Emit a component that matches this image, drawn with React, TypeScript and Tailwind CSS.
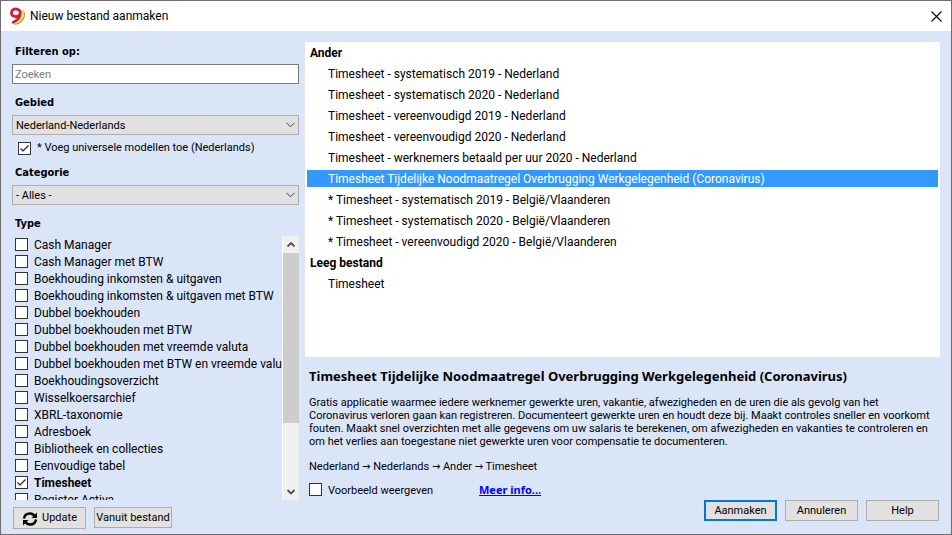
import { useState } from "react";

const types = [
  "Cash Manager",
  "Cash Manager met BTW",
  "Boekhouding inkomsten & uitgaven",
  "Boekhouding inkomsten & uitgaven met BTW",
  "Dubbel boekhouden",
  "Dubbel boekhouden met BTW",
  "Dubbel boekhouden met vreemde valuta",
  "Dubbel boekhouden met BTW en vreemde valuta",
  "Boekhoudingsoverzicht",
  "Wisselkoersarchief",
  "XBRL-taxonomie",
  "Adresboek",
  "Bibliotheek en collecties",
  "Eenvoudige tabel",
  "Timesheet",
  "Register Activa",
];

const groups = [
  {
    name: "Ander",
    items: [
      "Timesheet - systematisch 2019 - Nederland",
      "Timesheet - systematisch 2020 - Nederland",
      "Timesheet - vereenvoudigd 2019 - Nederland",
      "Timesheet - vereenvoudigd 2020 - Nederland",
      "Timesheet - werknemers betaald per uur 2020 - Nederland",
      "Timesheet Tijdelijke Noodmaatregel Overbrugging Werkgelegenheid (Coronavirus)",
      "* Timesheet - systematisch 2019 - België/Vlaanderen",
      "* Timesheet - systematisch 2020 - België/Vlaanderen",
      "* Timesheet - vereenvoudigd 2020 - België/Vlaanderen",
    ],
  },
  { name: "Leeg bestand", items: ["Timesheet"] },
];

function Check({ id, checked, onChange }: { id: string; checked: boolean; onChange: () => void }) {
  return (
    <span className="relative block size-[13px] shrink-0">
      <input
        id={id}
        type="checkbox"
        checked={checked}
        onChange={onChange}
        className="block size-[13px] appearance-none border border-[#333] bg-white"
      />
      {checked && (
        <svg viewBox="0 0 13 13" className="pointer-events-none absolute inset-0 size-[13px]" fill="none" stroke="#222" strokeWidth="1.2">
          <path d="M2.5 6.5 5 9l5.5-5.5" />
        </svg>
      )}
    </span>
  );
}

function Select({ id, options }: { id: string; options: string[] }) {
  return (
    <div className="relative">
      <select
        id={id}
        className="block h-5 w-full appearance-none border border-[#adadad] bg-[#e1e1e1] px-[3px] pt-px text-[11px] leading-4 text-black"
      >
        {options.map((o) => (
          <option key={o}>{o}</option>
        ))}
      </select>
      <svg viewBox="0 0 9 6" className="pointer-events-none absolute top-[7px] right-1 h-[6px] w-[9px]" fill="none" stroke="#444">
        <path d="M.5 .8 4.5 4.8 8.5 .8" />
      </svg>
    </div>
  );
}

const button = "flex items-center justify-center bg-[#e1e1e1] pt-px text-[11px] text-black";
const heading = "pl-[3px] text-[11px] leading-[18px] font-bold font-['DejaVu_Sans_Condensed','DejaVu_Sans',sans-serif]";

export default function App() {
  const [checked, setChecked] = useState<string[]>(["Timesheet"]);
  const [universal, setUniversal] = useState(true);
  const [preview, setPreview] = useState(false);
  const [selected, setSelected] = useState(groups[0].items[5]);

  const toggle = (t: string) =>
    setChecked((c) => (c.includes(t) ? c.filter((x) => x !== t) : [...c, t]));

  return (
    <div className="flex h-screen flex-col overflow-hidden border border-[#6e6e6e] bg-[#dbe5f8] font-['Roboto','DejaVu_Sans_Condensed',sans-serif] text-xs text-black">
      <header className="flex h-[30px] shrink-0 items-center bg-white pr-[7px] pl-2">
        <svg viewBox="0 0 16 18" className="mr-[5px] h-[18px] w-4" fill="none" strokeLinecap="round">
          <path d="M14 4.500c2.200 4.500-.5 10.500-7.500 12" stroke="#b98f2c" strokeWidth="2.400" />
          <path d="M13.600 3.500c2 4.500-.5 10.500-7.100 12.300" stroke="#f3dc70" strokeWidth="2" />
          <path d="M10.500 8C8.500 10.300 2.600 10.200 2.400 6 2.300 2.600 5.800 1.600 8 2.100c5.200 1.300 4.600 9.600-3.800 13.100" stroke="#d11f36" strokeWidth="2.800" />
        </svg>
        <h1 className="flex-1">Nieuw bestand aanmaken</h1>
        <button type="button" aria-label="Sluiten" className="flex size-4 items-center justify-center">
          <svg viewBox="0 0 11 11" className="size-[11px]" stroke="#000" strokeWidth="1.1">
            <path d="M.5 .5l10 10M10.500 .5l-10 10" />
          </svg>
        </button>
      </header>

      <div className="flex min-h-0 flex-1">
        <aside className="flex w-[298px] shrink-0 flex-col pb-[5px] pl-[11px]">
          <label htmlFor="search" className={"mt-3 " + heading}>
            Filteren op:
          </label>
          <input
            id="search"
            placeholder="Zoeken"
            className="mt-[3px] h-5 shrink-0 border border-[#7a7a7a] bg-white px-[2px] pt-px text-[11px] placeholder:text-[#7a7a7a]"
          />
          <label htmlFor="area" className={"mt-[10px] mb-[3px] " + heading}>
            Gebied
          </label>
          <Select id="area" options={["Nederland-Nederlands", "België-Nederlands"]} />
          <div className="mt-[6px] flex items-center gap-[6px] pl-[6px]">
            <Check id="universal" checked={universal} onChange={() => setUniversal(!universal)} />
            <label htmlFor="universal" className="text-[11px] leading-[14px]">
              * Voeg universele modellen toe (Nederlands)
            </label>
          </div>
          <label htmlFor="category" className={"mt-[9px] mb-[3px] " + heading}>
            Categorie
          </label>
          <Select id="category" options={["- Alles -", "Ander", "Leeg bestand"]} />
          <h2 className={"mt-[10px] " + heading}>Type</h2>
          <div className="mt-[3px] flex min-h-0 flex-1 pl-[3px]">
            <ul className="min-w-0 flex-1 overflow-hidden">
              {types.map((t, i) => (
                <li key={t} className="flex h-[17px] items-center gap-[6px]">
                  <Check id={"type" + i} checked={checked.includes(t)} onChange={() => toggle(t)} />
                  <label
                    htmlFor={"type" + i}
                    className={"h-[17px] pt-px leading-[17px] whitespace-nowrap " + (checked.includes(t) ? "font-bold" : "")}
                  >
                    {t}
                  </label>
                </li>
              ))}
            </ul>
            <div className="flex w-[17px] shrink-0 flex-col items-center border-l border-white bg-[#f0f0f0]">
              <svg viewBox="0 0 16 17" className="h-[17px] w-4 shrink-0" fill="none" stroke="#505050" strokeWidth="1.8">
                <path d="M4.500 10.500 8 7l3.500 3.500" />
              </svg>
              <div className="h-[170px] w-4 bg-[#cdcdcd]" />
              <svg viewBox="0 0 16 17" className="mt-auto h-[17px] w-4 shrink-0" fill="none" stroke="#505050" strokeWidth="1.8">
                <path d="M4.500 7 8 10.500 11.500 7" />
              </svg>
            </div>
          </div>
          <div className="mt-[7px] flex gap-2 pl-px">
            <button type="button" className={"h-[22px] w-[73px] gap-1 border border-[#adadad] " + button}>
              <svg viewBox="0 0 16 16" className="size-4" fill="none" stroke="#000" strokeWidth="2.400">
                <path d="M2 7.500C2.500 4 5 2.500 8 2.500c2 0 3.500 1 4.500 2.500M14 8.500c-.5 3.500-3 5-6 5-2 0-3.500-1-4.500-2.500" />
                <path d="M15 1.500V7H9.500zM1 14.500V9h5.500z" fill="#000" stroke="none" />
              </svg>
              Update
            </button>
            <button type="button" className={"h-[21px] w-[78px] border border-[#adadad] whitespace-nowrap " + button}>
              Vanuit bestand
            </button>
          </div>
        </aside>

        <main className="flex min-w-0 flex-1 flex-col pt-[11px] pr-[11px] pl-[6px]">
          <div className="min-h-0 flex-1 overflow-hidden bg-white px-[2px]">
            {groups.map((g) => (
              <section key={g.name}>
                <h2 className="h-[21px] pt-px pl-[3px] leading-[21px] font-bold">{g.name}</h2>
                <ul>
                  {g.items.map((it) => (
                    <li key={it} className="py-[2px]">
                      <button
                        type="button"
                        onClick={() => setSelected(it)}
                        className={
                          "block h-[17px] w-full pt-px pl-[21px] text-left leading-[17px] whitespace-nowrap " +
                          (it === selected ? "bg-[#3399ff] text-white" : "")
                        }
                      >
                        {it}
                      </button>
                    </li>
                  ))}
                </ul>
              </section>
            ))}
          </div>

          <div className="pt-[11px] pl-1 text-[11px] leading-[13px]">
            <h2 className="font-['Noto_Sans',sans-serif] text-[13px] leading-4 font-bold">{selected}</h2>
            <p className="mt-[12px] whitespace-nowrap">
              Gratis applicatie waarmee iedere werknemer gewerkte uren, vakantie, afwezigheden en de uren die als gevolg van het
              <br />
              Coronavirus verloren gaan kan registreren. Documenteert gewerkte uren en houdt deze bij. Maakt controles sneller en voorkomt
              <br />
              fouten. Maakt snel overzichten met alle gegevens om uw salaris te berekenen, om afwezigheden en vakanties te controleren en
              <br />
              om het verlies aan toegestane niet gewerkte uren voor compensatie te documenteren.
            </p>
            <p className="mt-3">Nederland → Nederlands → Ander → Timesheet</p>
            <div className="mt-[10px] flex items-center">
              <div className="flex w-[170px] items-center gap-[6px]">
                <Check id="preview" checked={preview} onChange={() => setPreview(!preview)} />
                <label htmlFor="preview" className="h-[13px] pt-px">
                  Voorbeeld weergeven
                </label>
              </div>
              <a href="#info" className="font-['Noto_Sans',sans-serif] font-bold text-[#0000ff] underline">
                Meer info...
              </a>
            </div>
          </div>
          <footer className="mt-1 mb-[13px] flex justify-end gap-2 pr-px">
            <button type="button" className={"h-[21px] w-[73px] border-2 border-[#0078d7] " + button}>
              Aanmaken
            </button>
            <button type="button" className={"h-[21px] w-[73px] border border-[#adadad] " + button}>
              Annuleren
            </button>
            <button type="button" className={"h-[21px] w-[73px] border border-[#adadad] " + button}>
              Help
            </button>
          </footer>
        </main>
      </div>
    </div>
  );
}
